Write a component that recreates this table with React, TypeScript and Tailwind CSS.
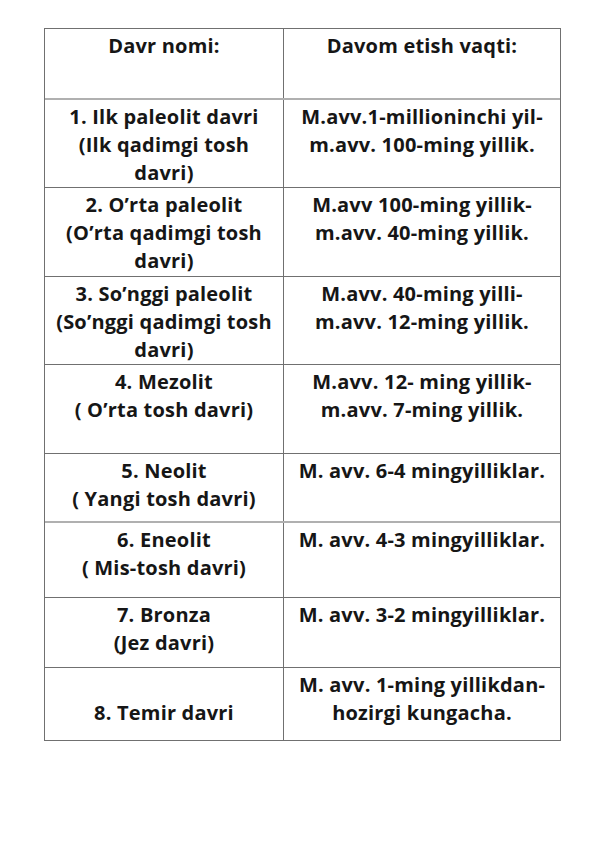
import React from "react";

type Row = { left: string[]; right: string[]; h: string };

const rows: Row[] = [
  { left: ["Davr nomi:"], right: ["Davom etish vaqti:"], h: "h-[71px]" },
  { left: ["1. Ilk paleolit davri", "(Ilk qadimgi tosh", "davri)"], right: ["M.avv.1-millioninchi yil-", "m.avv. 100-ming yillik."], h: "h-[88px]" },
  { left: ["2. O’rta paleolit", "(O’rta qadimgi tosh", "davri)"], right: ["M.avv 100-ming yillik-", "m.avv. 40-ming yillik."], h: "h-[89px]" },
  { left: ["3. So’nggi paleolit", "(So’nggi qadimgi tosh", "davri)"], right: ["M.avv. 40-ming yilli-", "m.avv. 12-ming yillik."], h: "h-[88px]" },
  { left: ["4. Mezolit", "( O’rta tosh davri)"], right: ["M.avv. 12- ming yillik-", "m.avv. 7-ming yillik."], h: "h-[89px]" },
  { left: ["5. Neolit", "( Yangi tosh davri)"], right: ["M. avv. 6-4 mingyilliklar."], h: "h-[69px]" },
  { left: ["6. Eneolit", "( Mis-tosh davri)"], right: ["M. avv. 4-3 mingyilliklar."], h: "h-[75px]" },
  { left: ["7. Bronza", "(Jez davri)"], right: ["M. avv. 3-2 mingyilliklar."], h: "h-[70px]" },
  { left: ["\u00a0", "8. Temir davri"], right: ["M. avv. 1-ming yillikdan-", "hozirgi kungacha."], h: "h-[72px]" },
];

export default function App() {
  return (
    <div className="w-[596px] h-[843px] bg-white pt-[28px] pl-[44px] text-[#161616] font-['Open_Sans',sans-serif]">
      <div className="w-[517px] border border-[#707070] flex flex-col">
        {rows.map((r, i) => (
          <div
            key={i}
            className={`flex ${r.h} ${i < rows.length - 1 ? (i === 0 || i === 5 ? "border-b-2 border-[#b0b0b0]" : "border-b border-[#707070]") : ""}`}
          >
            <div className="w-[239px] border-r border-[#707070] pt-[3px] text-center text-[20px] leading-[28px] font-bold tracking-[0.2px]">
              {r.left.map((t, j) => (
                <div key={j} className="whitespace-nowrap">{t}</div>
              ))}
            </div>
            <div className="flex-1 pt-[3px] text-center text-[20px] leading-[28px] font-bold tracking-[0.2px]">
              {r.right.map((t, j) => (
                <div key={j} className="whitespace-nowrap">{t}</div>
              ))}
            </div>
          </div>
        ))}
      </div>
    </div>
  );
}
